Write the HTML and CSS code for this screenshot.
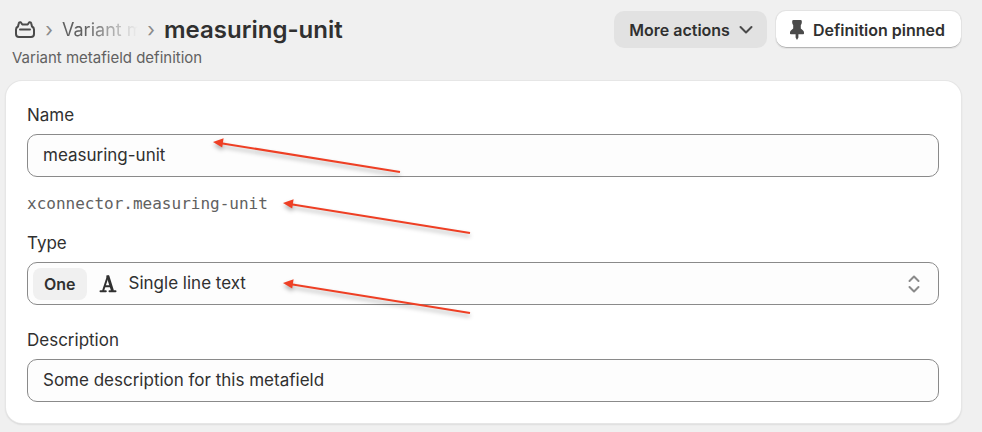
FILE: index.html
```html
<!DOCTYPE html>
<html lang="en">
<head>
  <meta charset="UTF-8">
  <meta name="viewport" content="width=device-width, initial-scale=1.0">
  <title>measuring-unit</title>
  <link rel="stylesheet" href="styles.css">
</head>
<body>

  <!-- shared arrow shape -->
  <svg class="defs" aria-hidden="true">
    <symbol id="arrow" viewBox="0 0 190 34">
      <path d="M8 3.2 187 32" stroke="#ee3f24" stroke-width="2" fill="none"/>
      <path d="M0 2 10.600 -1.800 9.200 7.600Z" fill="#ee3f24"/>
    </symbol>
  </svg>

  <header class="pageHeader">
    <div class="heading">
      <nav class="breadcrumbs">
        <a href="#" class="home" aria-label="Custom data">
          <svg width="22" height="18" viewBox="0 0 22 18" fill="none" stroke="#4a4a4a" stroke-width="2" stroke-linejoin="round" stroke-linecap="round">
            <path d="M4 5.500 4.800 2.300Q5 1.300 6 1.300H6.800L8.300 3.500H13.700L15.200 1.300H16Q17 1.300 17.200 2.300L18 5.500Q20 6.500 20 8.500V13Q20 16 17 16H5Q2 16 2 13V8.500Q2 6.500 4 5.500Z"/>
            <path d="M6 8.500H16"/>
          </svg>
        </a>
        <span class="sep">›</span>
        <a href="#" class="parent">Variant m</a>
        <span class="sep">›</span>
        <h1>measuring-unit</h1>
      </nav>
      <p class="subtitle">Variant metafield definition</p>
    </div>
    <div class="actions">
      <button type="button" class="btnMore">
        More actions
        <svg width="14" height="10" viewBox="0 0 14 10" fill="none" stroke="#4a4a4a" stroke-width="2" stroke-linecap="round" stroke-linejoin="round">
          <path d="M1.500 2 7 7.500 12.500 2"/>
        </svg>
      </button>
      <button type="button" class="btnPinned">
        <svg width="14" height="20" viewBox="0 0 14 20" fill="#4a4a4a">
          <path d="M3.500 0H10.500Q11.800 0 11.800 1.200V2.600Q11.800 3.800 11.200 4.400L10.800 4.900V8.600L12.800 10.200Q14 11.200 14 12.600V13.400Q14 14.200 13.200 14.200H8.400V17.500L7 20 5.600 17.500V14.200H.8Q0 14.200 0 13.400V12.600Q0 11.200 1.200 10.200L3.200 8.600V4.900L2.800 4.400Q2.200 3.800 2.200 2.600V1.200Q2.200 0 3.500 0Z"/>
        </svg>
        Definition pinned
      </button>
    </div>
  </header>

  <main class="card">
    <div class="field">
      <label for="name">Name</label>
      <input type="text" id="name" value="measuring-unit">
      <svg class="arrow arrowName" aria-hidden="true"><use href="#arrow"/></svg>
    </div>

    <div class="key">
      <code>xconnector.measuring-unit</code>
      <svg class="arrow arrowKey" aria-hidden="true"><use href="#arrow"/></svg>
    </div>

    <div class="field fieldType">
      <label for="type">Type</label>
      <div class="typeBox">
        <button type="button" class="btnOne">One</button>
        <svg class="textIcon" width="18" height="18" viewBox="0 0 18 18" fill="none" stroke="#303030">
          <path d="M4 16 8.600 2" stroke-width="2"/>
          <path d="M8.900 1 13.600 16" stroke-width="2.800"/>
          <path d="M7.500 1.200H10M5.500 11.200H12" stroke-width="2"/>
          <path d="M1.500 16.200H6.800M10.500 16.200H16.500" stroke-width="2" stroke-linecap="round"/>
        </svg>
        <select id="type">
          <option>Single line text</option>
          <option>Multi-line text</option>
        </select>
        <svg class="selectIcon" width="12" height="18" viewBox="0 0 12 18" fill="none" stroke="#8a8a8a" stroke-width="2" stroke-linecap="round" stroke-linejoin="round">
          <path d="M1.500 6 6 1.500 10.500 6M1.500 12 6 16.500 10.500 12"/>
        </svg>
      </div>
      <svg class="arrow arrowType" aria-hidden="true"><use href="#arrow"/></svg>
    </div>

    <div class="field">
      <label for="desc">Description</label>
      <input type="text" id="desc" value="Some description for this metafield">
    </div>
  </main>

</body>
</html>
```

FILE: styles.css
```css
* {
  box-sizing: border-box;
}

body {
  font-family: Inter, "Liberation Sans", sans-serif;
  font-size: 17px;
  line-height: 24px;
  color: #303030;
  background-color: #f0f0f0;
  margin: 0;
  padding: 11px 21px 9px 6px;
}

button,
input,
select {
  font: inherit;
  color: inherit;
}

a {
  text-decoration: none;
}

svg {
  flex: none;
}

.defs {
  position: absolute;
  width: 0;
  height: 0;
}

.pageHeader {
  display: flex;
  justify-content: space-between;
  align-items: flex-start;
  margin-bottom: 13px;
}

.heading {
  padding-left: 6px;
}

.breadcrumbs {
  display: flex;
  align-items: center;
  height: 37px;
  padding-left: 2px;
}

.home {
  display: flex;
}

.sep {
  width: 26px;
  text-align: center;
  font-size: 20px;
  color: #8a8a8a;
}

.parent {
  width: 76px;
  overflow: hidden;
  white-space: nowrap;
  font-size: 18px;
  color: #616161;
  /* fade out the long breadcrumb */
  -webkit-mask-image: linear-gradient(to right, #000 30%, transparent);
  mask-image: linear-gradient(to right, #000 30%, transparent);
}

h1 {
  margin: 0;
  font-size: 24px;
  font-weight: 600;
}

.subtitle {
  margin: 0;
  font-size: 15px;
  line-height: 20px;
  color: #616161;
}

.actions {
  display: flex;
  gap: 9px;
}

.actions button {
  display: flex;
  align-items: center;
  gap: 9px;
  height: 37px;
  border: none;
  border-radius: 10px;
  font-size: 16px;
  font-weight: 600;
  cursor: pointer;
}

.btnMore {
  padding: 0 14px 0 15px;
  background-color: #e2e2e2;
}

.btnPinned {
  padding: 0 16px 0 14px;
  background-color: #fff;
  box-shadow: inset 0 -1px 0 #b5b5b5, 0 0 0 1px #e3e3e3;
}

.card {
  padding: 22px 22px 21px 21px;
  background-color: #fff;
  border-radius: 16px;
  box-shadow: 0 0 0 1px #e6e6e6, 0 1px 2px #b5b5b5;
}

.field,
.key {
  position: relative;
}

label {
  display: block;
  margin-bottom: 7px;
}

input,
.typeBox {
  display: block;
  width: 100%;
  height: 43px;
  padding: 0 15px 2px;
  background-color: #fdfdfd;
  border: 1px solid #8a8a8a;
  border-radius: 10px;
}

.key {
  margin: 15px 0;
  color: #616161;
}

code {
  display: block;
  font-family: "DejaVu Sans Mono", monospace;
  font-size: 16px;
}

.fieldType {
  margin-bottom: 23px;
}

.typeBox {
  display: flex;
  align-items: center;
  padding: 0 18px 0 5px;
}

.btnOne {
  height: 32px;
  padding: 0 11px;
  background-color: #f0f0f0;
  border: none;
  border-radius: 8px;
  font-size: 16px;
  font-weight: 600;
}

.textIcon {
  margin: 0 12px;
}

select {
  flex: 1;
  padding: 0 0 2px;
  background: none;
  border: none;
  appearance: none;
}

/* arrows lie over the fields */
.arrow {
  position: absolute;
  width: 190px;
  height: 34px;
  overflow: visible;
  pointer-events: none;
  filter: drop-shadow(0 3px 2px rgba(0, 0, 0, 0.3));
}

#arrow {
  overflow: visible;
}

.arrowName {
  left: 186px;
  top: 37px;
}

.arrowKey {
  left: 256px;
  top: 9px;
}

.arrowType {
  left: 256px;
  top: 50px;
}
```
